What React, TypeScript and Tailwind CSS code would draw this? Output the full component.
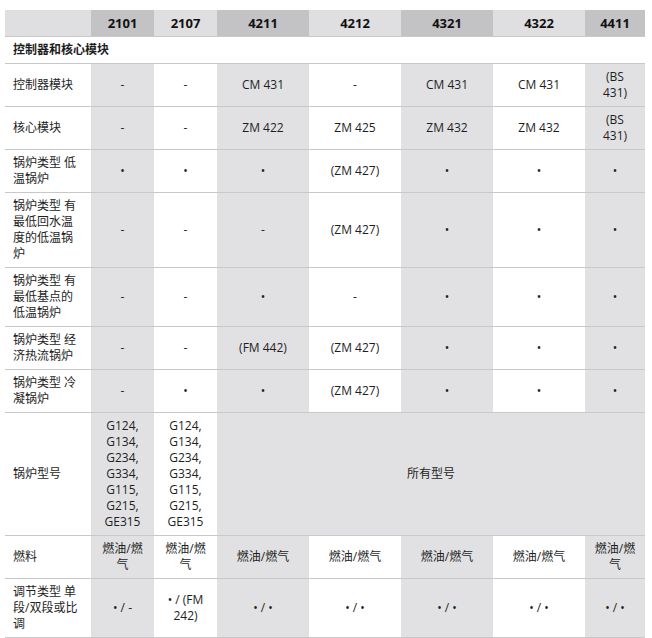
import React from "react";

const G = "bg-[#e1e1e3]";
const cols = [86, 63, 63, 92, 92, 92, 92, 60];
const grayCol = [false, true, false, true, false, true, false, true];

type Row = { label: string; cells: string[] };

const rows: Row[] = [
  { label: "控制器模块", cells: ["-", "-", "CM 431", "-", "CM 431", "CM 431", "(BS 431)"] },
  { label: "核心模块", cells: ["-", "-", "ZM 422", "ZM 425", "ZM 432", "ZM 432", "(BS 431)"] },
  { label: "锅炉类型 低温锅炉", cells: ["•", "•", "•", "(ZM 427)", "•", "•", "•"] },
  { label: "锅炉类型 有最低回水温度的低温锅炉", cells: ["-", "-", "-", "(ZM 427)", "•", "•", "•"] },
  { label: "锅炉类型 有最低基点的低温锅炉", cells: ["-", "-", "•", "-", "•", "•", "•"] },
  { label: "锅炉类型 经济热流锅炉", cells: ["-", "-", "(FM 442)", "(ZM 427)", "•", "•", "•"] },
  { label: "锅炉类型 冷凝锅炉", cells: ["-", "•", "•", "(ZM 427)", "•", "•", "•"] },
];

const td = "px-2 py-[5px] leading-4 border-b border-[#c8c8c8] align-middle";

export default function App() {
  return (
    <div className="bg-white w-[652px] h-[638px] pt-[10px] pl-[5px] text-[12px] text-[#1e1e1e]" style={{ fontFamily: '"Open Sans", "Noto Sans CJK SC", sans-serif' }}>
      <table className="table-fixed border-collapse w-[640px]">
        <colgroup>
          {cols.map((w, i) => (
            <col key={i} style={{ width: w }} />
          ))}
        </colgroup>
        <thead>
          <tr>
            <th className={`${td} bg-[#dfdfe1]`}></th>
            {["2101", "2107", "4211", "4212", "4321", "4322", "4411"].map((h, i) => (
              <th key={h} className={`${td} text-center font-bold text-[13px] text-[#111] ${grayCol[i + 1] ? "bg-[#c3c3c5]" : "bg-[#dfdfe1]"}`}>
                {h}
              </th>
            ))}
          </tr>
        </thead>
        <tbody>
          <tr>
            <td colSpan={8} className={`${td} text-left font-bold`}>控制器和核心模块</td>
          </tr>
          {rows.map((r) => (
            <tr key={r.label}>
              <td className={`${td} text-left`}>{r.label}</td>
              {r.cells.map((c, i) => (
                <td key={i} className={`${td} text-center ${grayCol[i + 1] ? G : ""}`}>{c}</td>
              ))}
            </tr>
          ))}
          <tr>
            <td className={`${td} text-left`}>锅炉型号</td>
            <td className={`${td} text-center ${G}`}>G124, G134, G234, G334, G115, G215, GE315</td>
            <td className={`${td} text-center`}>G124, G134, G234, G334, G115, G215, GE315</td>
            <td colSpan={5} className={`${td} text-center ${G}`}>所有型号</td>
          </tr>
          <tr>
            <td className={`${td} text-left`}>燃料</td>
            {Array.from({ length: 7 }).map((_, i) => (
              <td key={i} className={`${td} text-center ${grayCol[i + 1] ? G : ""}`}>燃油/燃气</td>
            ))}
          </tr>
          <tr>
            <td className={`${td} text-left`}>调节类型 单段/双段或比调</td>
            {["• / -", "• / (FM 242)", "• / •", "• / •", "• / •", "• / •", "• / •"].map((c, i) => (
              <td key={i} className={`${td} text-center ${grayCol[i + 1] ? G : ""}`}>{c}</td>
            ))}
          </tr>
        </tbody>
      </table>
    </div>
  );
}
